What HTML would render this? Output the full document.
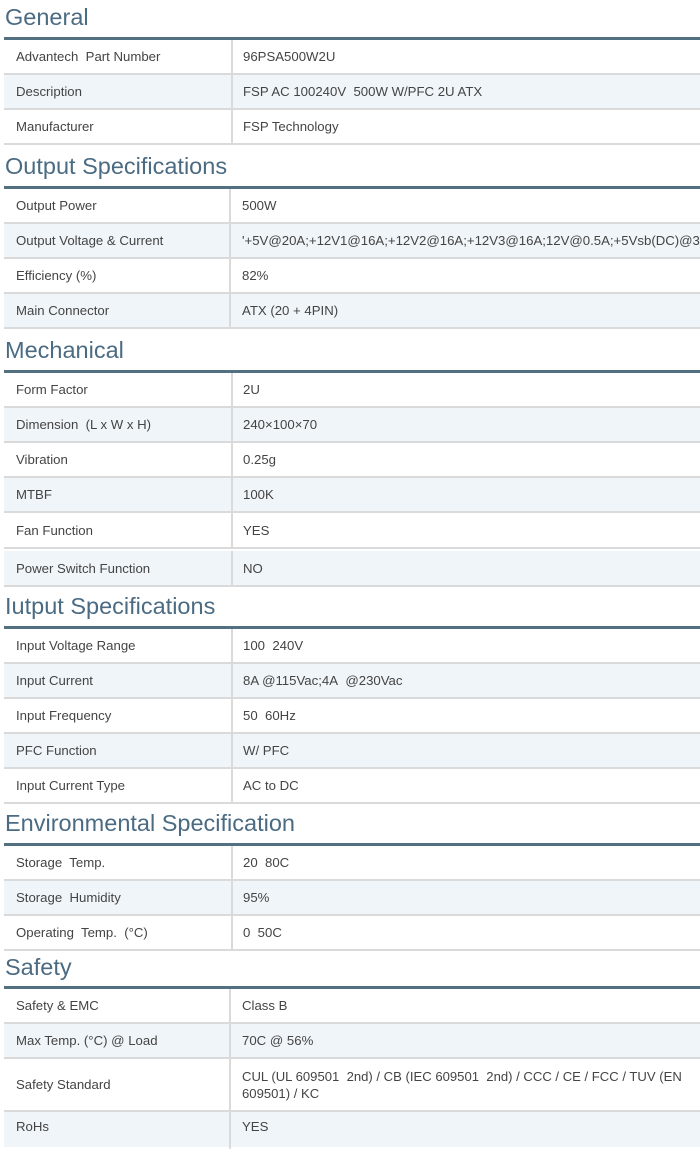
<!DOCTYPE html>
<html><head><meta charset="utf-8"><style>
body{margin:0;width:700px;height:1140px;overflow:hidden;background:#fff;position:relative;font-family:"Liberation Sans",Arial,sans-serif;}
.h{position:absolute;left:5px;font-size:23.5px;color:#4b6b83;line-height:28px;white-space:nowrap}
.bar{position:absolute;left:4px;width:696px;height:3px;background:#52707f}
.r{position:absolute;left:4px;width:696px;border-bottom:2px solid #dadada;box-sizing:border-box;font-size:13.2px;color:#444}
.r.a{background:#f0f5f9}
.r .l{position:absolute;left:12px;top:0;bottom:0;display:flex;align-items:center}
.r .v{position:absolute;left:239px;top:0;bottom:0;display:flex;align-items:center;line-height:17px;white-space:nowrap}
.r .d{position:absolute;left:227px;top:0;bottom:-2px;width:2px;background:#dadada}
</style></head><body>

<div class="h" style="top:3px">General</div>
<div class="bar" style="top:37px"></div>
<div class="r" style="top:40px;height:35px"><div class="l">Advantech&nbsp; Part Number</div><div class="d"></div><div class="v">96PSA500W2U</div></div>
<div class="r a" style="top:75px;height:35px"><div class="l">Description</div><div class="d"></div><div class="v">FSP AC 100240V&nbsp; 500W W/PFC 2U ATX</div></div>
<div class="r" style="top:110px;height:35px"><div class="l">Manufacturer</div><div class="d"></div><div class="v">FSP Technology</div></div>

<div class="h" style="top:152px">Output Specifications</div>
<div class="bar" style="top:186px"></div>
<div class="r" style="top:189px;height:35px"><div class="l">Output Power</div><div class="d" style="left:225px"></div><div class="v" style="left:238px">500W</div></div>
<div class="r a" style="top:224px;height:35px"><div class="l">Output Voltage &amp; Current</div><div class="d" style="left:225px"></div><div class="v" style="left:238px">'+5V@20A;+12V1@16A;+12V2@16A;+12V3@16A;12V@0.5A;+5Vsb(DC)@3.5A</div></div>
<div class="r" style="top:259px;height:35px"><div class="l">Efficiency (%)</div><div class="d" style="left:225px"></div><div class="v" style="left:238px">82%</div></div>
<div class="r a" style="top:294px;height:35px"><div class="l">Main Connector</div><div class="d" style="left:225px"></div><div class="v" style="left:238px">ATX (20 + 4PIN)</div></div>

<div class="h" style="top:336px">Mechanical</div>
<div class="bar" style="top:370px"></div>
<div class="r" style="top:373px;height:35px"><div class="l">Form Factor</div><div class="d"></div><div class="v">2U</div></div>
<div class="r a" style="top:408px;height:35px"><div class="l">Dimension&nbsp; (L x W x H)</div><div class="d"></div><div class="v">240×100×70</div></div>
<div class="r" style="top:443px;height:35px"><div class="l">Vibration</div><div class="d"></div><div class="v">0.25g</div></div>
<div class="r a" style="top:478px;height:35px"><div class="l">MTBF</div><div class="d"></div><div class="v">100K</div></div>
<div class="r" style="top:513px;height:36px"><div class="l">Fan Function</div><div class="d"></div><div class="v">YES</div></div>
<div class="r a" style="top:551px;height:36px"><div class="l">Power Switch Function</div><div class="d"></div><div class="v">NO</div></div>

<div class="h" style="top:592px">Iutput Specifications</div>
<div class="bar" style="top:626px"></div>
<div class="r" style="top:629px;height:35px"><div class="l">Input Voltage Range</div><div class="d"></div><div class="v">100&nbsp; 240V</div></div>
<div class="r a" style="top:664px;height:35px"><div class="l">Input Current</div><div class="d"></div><div class="v">8A @115Vac;4A&nbsp; @230Vac</div></div>
<div class="r" style="top:699px;height:35px"><div class="l">Input Frequency</div><div class="d"></div><div class="v">50&nbsp; 60Hz</div></div>
<div class="r a" style="top:734px;height:35px"><div class="l">PFC Function</div><div class="d"></div><div class="v">W/ PFC</div></div>
<div class="r" style="top:769px;height:35px"><div class="l">Input Current Type</div><div class="d"></div><div class="v">AC to DC</div></div>

<div class="h" style="top:809px">Environmental Specification</div>
<div class="bar" style="top:843px"></div>
<div class="r" style="top:846px;height:35px"><div class="l">Storage&nbsp; Temp.</div><div class="d"></div><div class="v">20&nbsp; 80C</div></div>
<div class="r a" style="top:881px;height:35px"><div class="l">Storage&nbsp; Humidity</div><div class="d"></div><div class="v">95%</div></div>
<div class="r" style="top:916px;height:35px"><div class="l">Operating&nbsp; Temp.&nbsp; (°C)</div><div class="d"></div><div class="v">0&nbsp; 50C</div></div>

<div class="h" style="top:953px">Safety</div>
<div class="bar" style="top:986px"></div>
<div class="r" style="top:989px;height:35px"><div class="l">Safety &amp; EMC</div><div class="d" style="left:225px"></div><div class="v" style="left:238px">Class B</div></div>
<div class="r a" style="top:1024px;height:35px"><div class="l">Max Temp. (°C) @ Load</div><div class="d" style="left:225px"></div><div class="v" style="left:238px">70C @ 56%</div></div>
<div class="r" style="top:1059px;height:53px"><div class="l">Safety Standard</div><div class="d" style="left:225px"></div><div class="v" style="left:238px;font-size:13.1px">CUL (UL 609501&nbsp; 2nd) / CB (IEC 609501&nbsp; 2nd) / CCC / CE / FCC / TUV (EN<br>609501) / KC</div></div>
<div class="r a" style="top:1112px;height:35px;border-bottom:none"><div class="l" style="bottom:7px">RoHs</div><div class="d" style="left:225px"></div><div class="v" style="left:238px;bottom:7px">YES</div></div>

</body></html>
